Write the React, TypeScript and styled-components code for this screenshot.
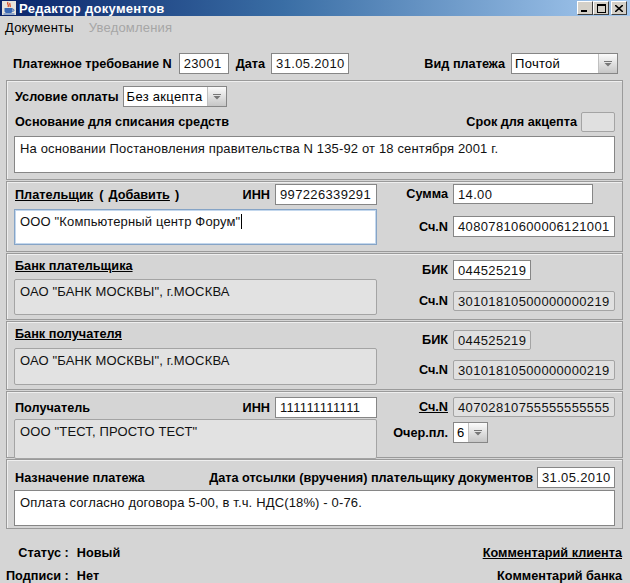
import styled, { createGlobalStyle } from 'styled-components'

const GlobalStyle = createGlobalStyle`
  body {
    margin: 0;
    background: #d5d5d5;
  }
  * {
    box-sizing: border-box;
  }
`

const Window = styled.div`
  width: 630px;
  height: 583px;
  overflow: hidden;
  background: #d5d5d5;
  font-family: 'Liberation Sans', Arial, sans-serif;
  font-size: 12px;
  color: #000;
  display: flex;
  flex-direction: column;
`

const TitleBar = styled.div`
  height: 16px;
  flex: none;
  display: flex;
  align-items: center;
  padding: 0 3px 0 2px;
  background: linear-gradient(to right, #0a246a 0%, #3a6ea5 45%, #a6caf0 100%);
`

const Title = styled.span`
  flex: 1;
  margin-left: 3px;
  color: #fff;
  font-weight: bold;
  font-size: 13px;
  letter-spacing: 0.3px;
`

const WinButton = styled.div<{ $space?: number }>`
  width: 16px;
  height: 14px;
  margin-left: ${(p) => p.$space ?? 0}px;
  background: #d4d0c8;
  border: 1px solid;
  border-color: #fff #404040 #404040 #fff;
  display: flex;
  align-items: center;
  justify-content: center;
`

const MenuBar = styled.div`
  height: 22px;
  flex: none;
  display: flex;
  align-items: center;
  gap: 15px;
  padding-left: 5px;
  font-size: 13px;
`

const MenuItem = styled.span<{ $disabled?: boolean }>`
  color: ${(p) => (p.$disabled ? '#a6a6a6' : '#000')};
  letter-spacing: 0.2px;
`

const Body = styled.div`
  flex: 1;
  display: flex;
  flex-direction: column;
  gap: 1px;
  padding: 0 7px 0 6px;
`

const TopRow = styled.div`
  height: 21px;
  margin: 15px 0 5px;
  padding: 0 5px 0 7px;
  display: flex;
  align-items: center;
`

const Label = styled.span<{ $u?: boolean; $ml?: number; $mr?: number }>`
  font-weight: bold;
  font-size: 12.7px;
  white-space: nowrap;
  text-decoration: ${(p) => (p.$u ? 'underline' : 'none')};
  margin-left: ${(p) => p.$ml ?? 0}px;
  margin-right: ${(p) => p.$mr ?? 0}px;
`

const Spacer = styled.div`
  flex: 1;
`

const Field = styled.div<{ $w: number; $h?: number; $disabled?: boolean }>`
  width: ${(p) => p.$w}px;
  height: ${(p) => p.$h ?? 21}px;
  flex: none;
  display: flex;
  align-items: center;
  padding: 0 4px;
  font-size: 13px;
  letter-spacing: 0.35px;
  white-space: nowrap;
  overflow: hidden;
  color: #111;
  background: ${(p) => (p.$disabled ? '#e0e0e0' : '#fff')};
  border: 1px solid ${(p) => (p.$disabled ? '#a4a4a4' : '#868686')};
  border-radius: ${(p) => (p.$disabled ? 2 : 0)}px;
`

const Combo = styled.div<{ $w: number }>`
  width: ${(p) => p.$w}px;
  height: 21px;
  flex: none;
  display: flex;
  background: #fff;
  border: 1px solid #868686;
`

const ComboValue = styled.div`
  flex: 1;
  display: flex;
  align-items: center;
  padding-left: 3px;
  font-size: 13px;
  letter-spacing: 0.3px;
  white-space: nowrap;
  overflow: hidden;
`

const ComboArrow = styled.div`
  width: 19px;
  display: flex;
  align-items: center;
  justify-content: center;
  background: linear-gradient(#fbfbfb, #c6c6c6);
  border-left: 1px solid #c0c0c0;
`

const Panel = styled.div<{ $h: number; $pt?: number }>`
  height: ${(p) => p.$h}px;
  flex: none;
  padding: ${(p) => p.$pt ?? 2}px 7px 0 7px;
  border: 1px solid #9a9a9a;
  box-shadow: inset 1px 1px 0 #efefef;
`

const PanelGrid = styled(Panel)`
  display: grid;
  grid-template-columns: 363px 230px;
  column-gap: 8px;
  align-items: start;
`

const Column = styled.div`
  display: flex;
  flex-direction: column;
`

const Row = styled.div<{ $h?: number; $mt?: number }>`
  height: ${(p) => p.$h ?? 21}px;
  margin-top: ${(p) => p.$mt ?? 0}px;
  display: flex;
  align-items: center;
`

const SideGrid = styled.div<{ $mt?: number; $gap: number }>`
  margin-top: ${(p) => p.$mt ?? 0}px;
  display: grid;
  grid-template-columns: 63px 162px;
  column-gap: 5px;
  row-gap: ${(p) => p.$gap}px;
  align-items: center;
  justify-items: start;

  & > span {
    justify-self: end;
  }
`

const TextArea = styled.div<{ $h: number; $mt: number; $disabled?: boolean; $focused?: boolean }>`
  height: ${(p) => p.$h}px;
  margin-top: ${(p) => p.$mt}px;
  padding: 4px 5px;
  font-size: 13px;
  letter-spacing: 0.15px;
  white-space: nowrap;
  overflow: hidden;
  color: #111;
  background: ${(p) => (p.$disabled ? '#e2e2e2' : '#fff')};
  border: 1px solid ${(p) => (p.$focused ? '#86a4c6' : p.$disabled ? '#a4a4a4' : '#868686')};
  border-radius: ${(p) => (p.$disabled ? 2 : 0)}px;
  box-shadow: ${(p) => (p.$focused ? 'inset 0 0 0 1px #c3d7ed' : 'none')};
`

const Caret = styled.span`
  display: inline-block;
  width: 1px;
  height: 15px;
  margin-left: 1px;
  vertical-align: -3px;
  background: #000;
`

const Footer = styled.div`
  display: flex;
  justify-content: space-between;
  padding: 11px 1px 0 0;
`

const FooterGrid = styled.div<{ $align: 'start' | 'end' }>`
  display: grid;
  grid-auto-rows: 23px;
  grid-template-columns: ${(p) => (p.$align === 'start' ? 'auto auto' : 'auto')};
  column-gap: 8px;
  align-items: center;
  justify-items: ${(p) => p.$align};

  & > span:nth-child(odd) {
    justify-self: end;
  }
`

const FooterText = styled.span<{ $u?: boolean }>`
  font-weight: bold;
  font-size: 12.7px;
  white-space: nowrap;
  text-decoration: ${(p) => (p.$u ? 'underline' : 'none')};
`

const ArrowIcon = () => (
  <svg width="8" height="6" viewBox="0 0 8 6">
    <rect x="0" y="0" width="8" height="1" fill="#777" />
    <polygon points="0.5,2 7.5,2 4,5.5" fill="#777" />
  </svg>
)

const Select = ({ w, value }: { w: number; value: string }) => (
  <Combo $w={w}>
    <ComboValue>{value}</ComboValue>
    <ComboArrow>
      <ArrowIcon />
    </ComboArrow>
  </Combo>
)

const JavaIcon = () => (
  <svg width="14" height="14" viewBox="0 0 14 14">
    <rect x="0" y="0" width="14" height="14" fill="#e8e4dc" />
    <path d="M6 1 C4.5 3 7.5 4 6 6 M8 2 C7 3.5 9 4.5 8 6" stroke="#d9401a" strokeWidth="1.2" fill="none" />
    <path d="M2.5 7 H10.5 V10 C10.5 11.5 9.5 12 8 12 H5 C3.5 12 2.5 11.5 2.5 10 Z" fill="#3a68b4" />
    <path d="M10.5 8 C12.5 8 12.5 10.5 10.5 10.5" stroke="#3a68b4" strokeWidth="1" fill="none" />
    <rect x="1.5" y="12.5" width="11" height="1" fill="#3a68b4" />
  </svg>
)

export default function App() {
  return (
    <Window>
      <GlobalStyle />
      <TitleBar>
        <JavaIcon />
        <Title>Редактор документов</Title>
        <WinButton>
          <svg width="8" height="8" viewBox="0 0 8 8">
            <rect x="0" y="6" width="6" height="2" fill="#000" />
          </svg>
        </WinButton>
        <WinButton>
          <svg width="9" height="9" viewBox="0 0 9 9">
            <rect x="0.5" y="0.5" width="8" height="8" fill="none" stroke="#000" />
            <rect x="0" y="0" width="9" height="2" fill="#000" />
          </svg>
        </WinButton>
        <WinButton $space={2}>
          <svg width="8" height="7" viewBox="0 0 8 7">
            <path d="M0 0 L8 7 M8 0 L0 7" stroke="#000" strokeWidth="1.6" />
          </svg>
        </WinButton>
      </TitleBar>

      <MenuBar>
        <MenuItem>Документы</MenuItem>
        <MenuItem $disabled>Уведомления</MenuItem>
      </MenuBar>

      <Body>
        <TopRow>
          <Label $mr={7}>Платежное требование N</Label>
          <Field $w={50}>23001</Field>
          <Label $ml={7} $mr={6}>
            Дата
          </Label>
          <Field $w={78}>31.05.2010</Field>
          <Spacer />
          <Label $mr={6}>Вид платежа</Label>
          <Select w={107} value="Почтой" />
        </TopRow>

        <Panel $h={100} $pt={5}>
          <Row>
            <Label $ml={1} $mr={4}>
              Условие оплаты
            </Label>
            <Select w={104} value="Без акцепта" />
          </Row>
          <Row $h={20} $mt={5}>
            <Label $ml={1}>Основание для списания средств</Label>
            <Spacer />
            <Label $mr={4}>Срок для акцепта</Label>
            <Field $w={34} $h={20} $disabled />
          </Row>
          <TextArea $h={37} $mt={4}>
            На основании Постановления правительства N 135-92 от 18 сентября 2001 г.
          </TextArea>
        </Panel>

        <PanelGrid $h={71}>
          <Column>
            <Row>
              <Label $ml={1} $u>
                Плательщик
              </Label>
              <Label $ml={6}>(</Label>
              <Label $ml={5} $u>
                Добавить
              </Label>
              <Label $ml={5}>)</Label>
              <Spacer />
              <Label $mr={5}>ИНН</Label>
              <Field $w={102}>997226339291</Field>
            </Row>
            <TextArea $h={36} $mt={4} $focused>
              ООО "Компьютерный центр Форум"
              <Caret />
            </TextArea>
          </Column>
          <SideGrid $gap={12}>
            <Label>Сумма</Label>
            <Field $w={140} $h={20}>
              14.00
            </Field>
            <Label>Сч.N</Label>
            <Field $w={162}>40807810600006121001</Field>
          </SideGrid>
        </PanelGrid>

        <PanelGrid $h={67}>
          <Column>
            <Row $h={20}>
              <Label $ml={1} $u>
                Банк плательщика
              </Label>
            </Row>
            <TextArea $h={36} $mt={3} $disabled>
              ОАО "БАНК МОСКВЫ", г.МОСКВА
            </TextArea>
          </Column>
          <SideGrid $mt={4} $gap={11}>
            <Label>БИК</Label>
            <Field $w={78} $h={20}>
              044525219
            </Field>
            <Label>Сч.N</Label>
            <Field $w={162} $h={20} $disabled>
              30101810500000000219
            </Field>
          </SideGrid>
        </PanelGrid>

        <PanelGrid $h={69}>
          <Column>
            <Row $h={20}>
              <Label $ml={1} $u>
                Банк получателя
              </Label>
            </Row>
            <TextArea $h={37} $mt={4} $disabled>
              ОАО "БАНК МОСКВЫ", г.МОСКВА
            </TextArea>
          </Column>
          <SideGrid $mt={6} $gap={10}>
            <Label>БИК</Label>
            <Field $w={78} $h={20} $disabled>
              044525219
            </Field>
            <Label>Сч.N</Label>
            <Field $w={162} $h={20} $disabled>
              30101810500000000219
            </Field>
          </SideGrid>
        </PanelGrid>

        <PanelGrid $h={67} $pt={5}>
          <Column>
            <Row>
              <Label $ml={1}>Получатель</Label>
              <Spacer />
              <Label $mr={5}>ИНН</Label>
              <Field $w={102}>111111111111</Field>
            </Row>
            <TextArea $h={40} $mt={1} $disabled>
              ООО "ТЕСТ, ПРОСТО ТЕСТ"
            </TextArea>
          </Column>
          <SideGrid $gap={5}>
            <Label $u>Сч.N</Label>
            <Field $w={162} $h={20} $disabled>
              40702810755555555555
            </Field>
            <Label>Очер.пл.</Label>
            <Select w={35} value="6" />
          </SideGrid>
        </PanelGrid>

        <Panel $h={70} $pt={7}>
          <Row>
            <Label $ml={1}>Назначение платежа</Label>
            <Spacer />
            <Label $mr={4}>Дата отсылки (вручения) плательщику документов</Label>
            <Field $w={78}>31.05.2010</Field>
          </Row>
          <TextArea $h={36} $mt={2}>
            Оплата согласно договора 5-00, в т.ч. НДС(18%) - 0-76.
          </TextArea>
        </Panel>

        <Footer>
          <FooterGrid $align="start">
            <FooterText>Статус :</FooterText>
            <FooterText>Новый</FooterText>
            <FooterText>Подписи :</FooterText>
            <FooterText>Нет</FooterText>
          </FooterGrid>
          <FooterGrid $align="end">
            <FooterText $u>Комментарий клиента</FooterText>
            <FooterText>Комментарий банка</FooterText>
          </FooterGrid>
        </Footer>
      </Body>
    </Window>
  )
}
